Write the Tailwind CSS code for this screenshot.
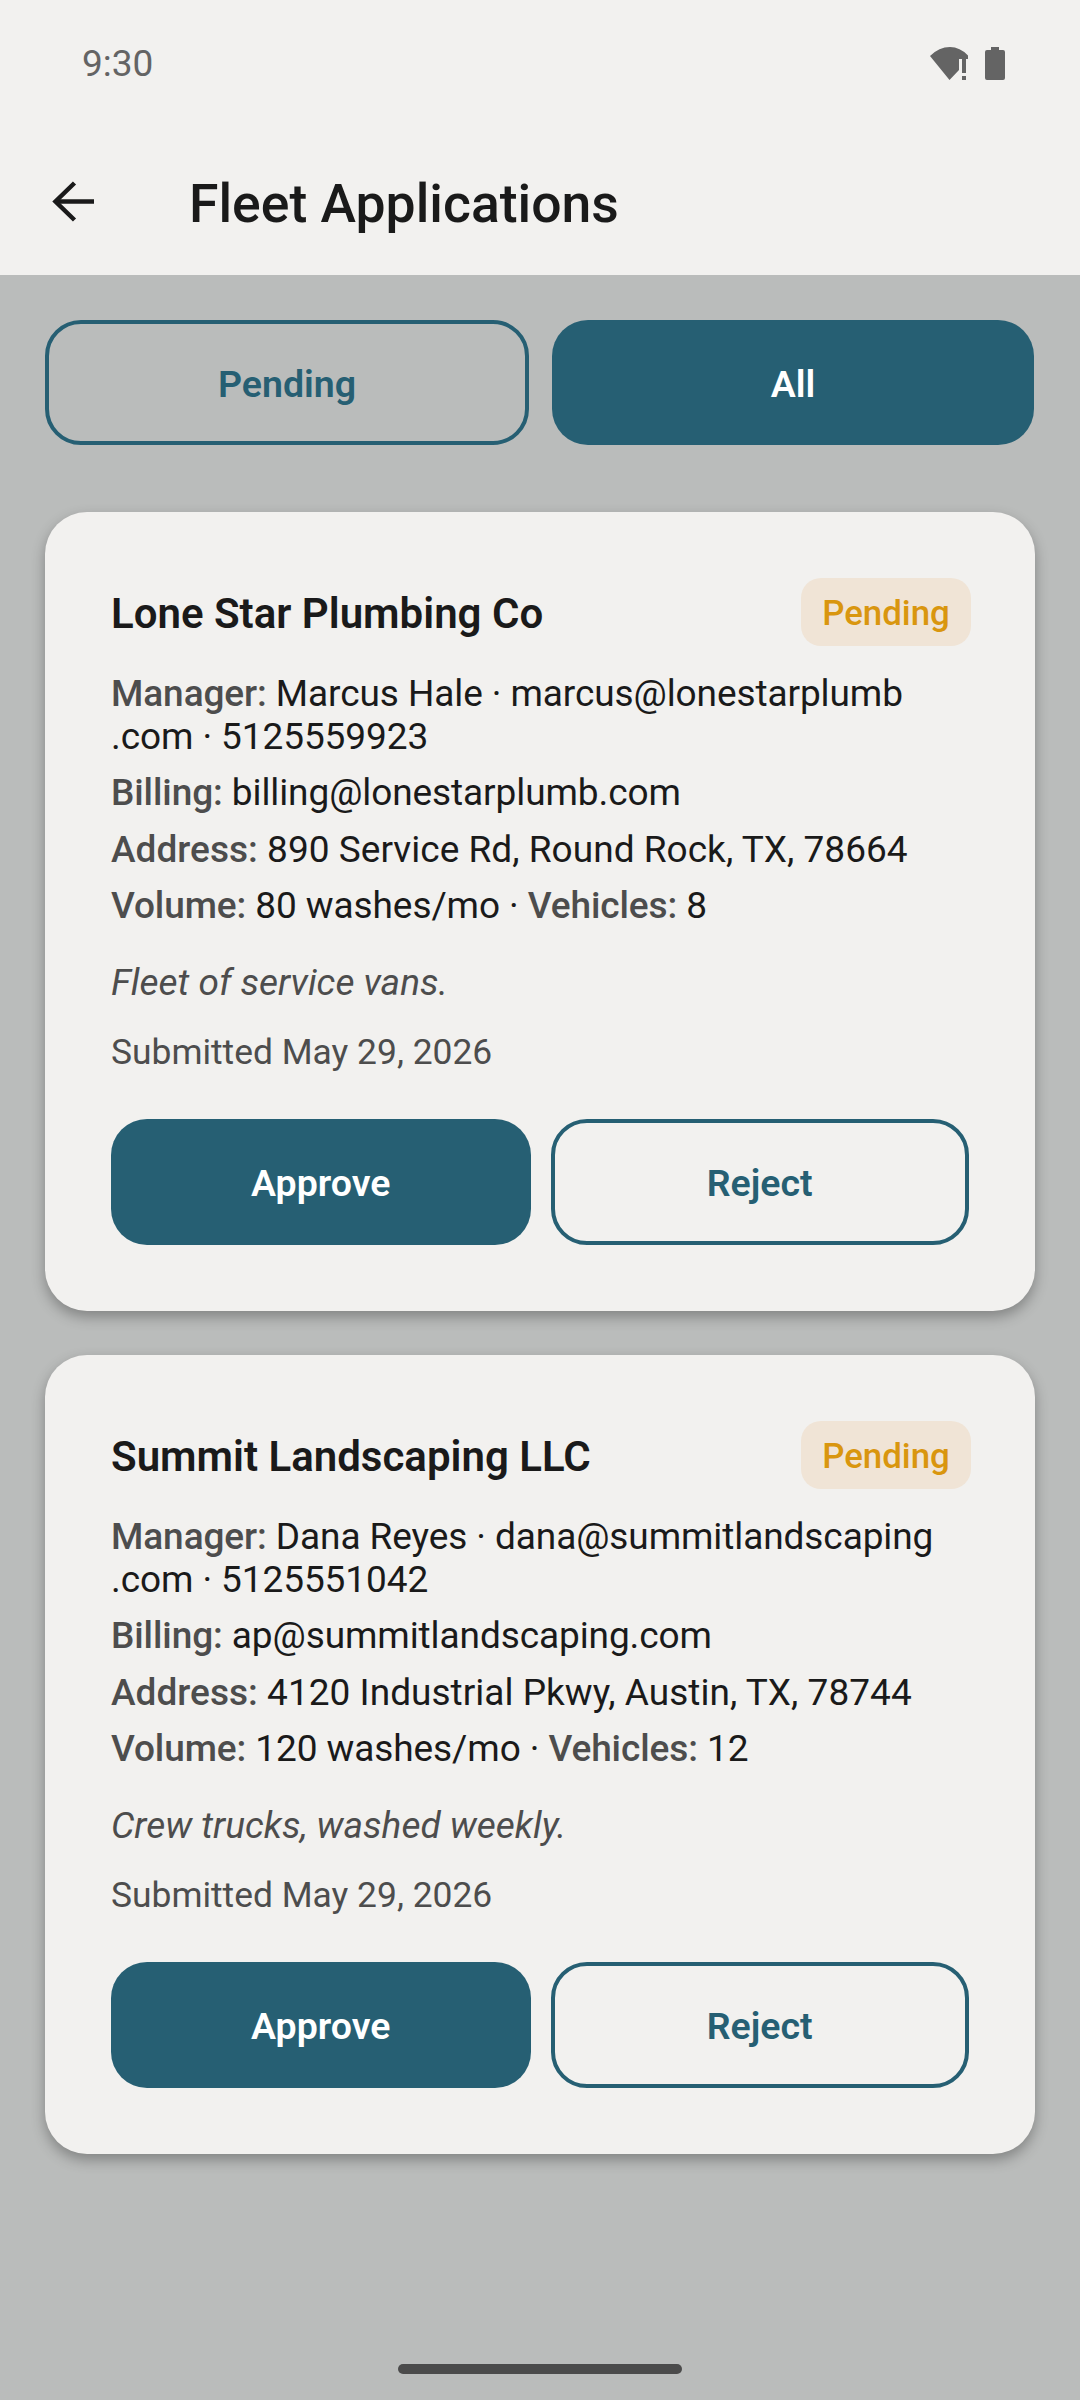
<!DOCTYPE html>
<html lang="en">
  <head>
    <meta charset="UTF-8" />
    <meta name="viewport" content="width=device-width, initial-scale=1.0" />
    <title>Fleet Applications</title>
    <script src="https://cdn.jsdelivr.net/npm/@tailwindcss/browser@4"></script>
  </head>
  <body class="w-[1080px] h-[2400px] overflow-hidden bg-[#babcbb] font-[Roboto,sans-serif] relative">
    <!-- status bar + app bar -->
    <header class="h-[275px] bg-[#f2f1ef]">
      <div class="h-[126px] flex items-start justify-between pl-[82px] pr-[75px] pt-[42px]">
        <span class="text-[37px] leading-[44px] text-[#646464]">9:30</span>
        <div class="flex items-start gap-[17px] pt-[5px]">
          <svg width="38" height="33" viewBox="0 0 38 33">
            <path d="M0 9 Q9 0 20 0 Q30 0 38 8.5 V12 H29 V23 L19.5 33 Z" fill="#646464" />
            <rect x="32" y="12" width="4" height="14" fill="#646464" />
            <rect x="32" y="29" width="4" height="4" fill="#646464" />
          </svg>
          <svg width="20" height="33" viewBox="0 0 20 33">
            <path d="M6 0 H14 V3 H18 Q20 3 20 5 V31 Q20 33 18 33 H2 Q0 33 0 31 V5 Q0 3 2 3 H6 Z" fill="#646464" />
          </svg>
        </div>
      </div>
      <div class="h-[149px] flex items-start">
        <button class="ml-[52px] mt-[55px] w-[42px] h-[42px]">
          <svg width="42" height="42" viewBox="0 0 42 42" fill="none" stroke="#1a1a1a" stroke-width="4.5">
            <path d="M42 20.5 H4" />
            <path d="M22.5 2 L3.5 20.5 L22.5 39" />
          </svg>
        </button>
        <h1 class="ml-[95px] mt-[48px] text-[53.5px] leading-[60px] font-medium text-[#1a1a1a]">Fleet Applications</h1>
      </div>
    </header>

    <main class="px-[45px] pt-[45px]">
      <div class="flex gap-[23px] mb-[67px]">
        <button class="w-[484px] h-[125px] pt-[4px] rounded-[36px] border-[4px] border-[#265f73] text-[37.5px] font-semibold text-[#265f73]">Pending</button>
        <button class="w-[482px] h-[125px] pt-[4px] rounded-[36px] bg-[#265f73] text-[37.5px] font-semibold text-white">All</button>
      </div>

      <div class="flex flex-col gap-[44px]">
        <section class="h-[799px] rounded-[42px] bg-[#f2f1ef] shadow-[0_6px_14px_rgba(0,0,0,0.3)] px-[66px] pt-[66px]">
          <div class="flex items-center justify-between h-[68px] -mr-[2px]">
            <h2 class="pt-[3px] text-[42px] font-semibold text-[#1a1a1a]">Lone Star Plumbing Co</h2>
            <span class="w-[170px] h-[68px] pt-[2px] flex items-center justify-center rounded-[20px] bg-[#f0e4d6] text-[34.8px] font-medium text-[#d9960f]">Pending</span>
          </div>
          <div class="mt-[26px] text-[37px] leading-[43px] text-[#1a1a1a]">
            <p class="tracking-[-0.09px]"><b class="font-medium text-[#4d4d4d]">Manager:</b> Marcus Hale · marcus@lonestarplumb<br />.com · 5125559923</p>
            <p class="mt-[13px] tracking-[-0.09px]"><b class="font-medium text-[#4d4d4d]">Billing:</b> billing@lonestarplumb.com</p>
            <p class="mt-[14px] tracking-[0.03px]"><b class="font-medium text-[#4d4d4d]">Address:</b> 890 Service Rd, Round Rock, TX, 78664</p>
            <p class="mt-[13px] tracking-[-0.09px]"><b class="font-medium text-[#4d4d4d]">Volume:</b> 80 washes/mo · <b class="font-medium text-[#4d4d4d]">Vehicles:</b> 8</p>
          </div>
          <p class="mt-[34px] text-[37px] leading-[43px] italic text-[#4d4d4d]">Fleet of service vans.</p>
          <p class="mt-[27px] text-[35.4px] leading-[43px] text-[#4d4d4d]">Submitted May 29, 2026</p>
          <div class="mt-[45px] flex gap-[20px]">
            <button class="w-[420px] h-[126px] pt-[2px] rounded-[36px] bg-[#265f73] text-[37.5px] font-semibold text-white">Approve</button>
            <button class="w-[419px] h-[126px] pt-[2px] rounded-[36px] border-[4px] border-[#265f73] text-[37.5px] font-semibold text-[#265f73]">Reject</button>
          </div>
        </section>

        <section class="h-[799px] rounded-[42px] bg-[#f2f1ef] shadow-[0_6px_14px_rgba(0,0,0,0.3)] px-[66px] pt-[66px]">
          <div class="flex items-center justify-between h-[68px] -mr-[2px]">
            <h2 class="pt-[3px] text-[42px] font-semibold text-[#1a1a1a]">Summit Landscaping LLC</h2>
            <span class="w-[170px] h-[68px] pt-[2px] flex items-center justify-center rounded-[20px] bg-[#f0e4d6] text-[34.8px] font-medium text-[#d9960f]">Pending</span>
          </div>
          <div class="mt-[26px] text-[37px] leading-[43px] text-[#1a1a1a]">
            <p class="tracking-[-0.09px]"><b class="font-medium text-[#4d4d4d]">Manager:</b> Dana Reyes · dana@summitlandscaping<br />.com · 5125551042</p>
            <p class="mt-[13px] tracking-[-0.09px]"><b class="font-medium text-[#4d4d4d]">Billing:</b> ap@summitlandscaping.com</p>
            <p class="mt-[14px] tracking-[0.03px]"><b class="font-medium text-[#4d4d4d]">Address:</b> 4120 Industrial Pkwy, Austin, TX, 78744</p>
            <p class="mt-[13px] tracking-[-0.09px]"><b class="font-medium text-[#4d4d4d]">Volume:</b> 120 washes/mo · <b class="font-medium text-[#4d4d4d]">Vehicles:</b> 12</p>
          </div>
          <p class="mt-[34px] text-[37px] leading-[43px] italic text-[#4d4d4d]">Crew trucks, washed weekly.</p>
          <p class="mt-[27px] text-[35.4px] leading-[43px] text-[#4d4d4d]">Submitted May 29, 2026</p>
          <div class="mt-[45px] flex gap-[20px]">
            <button class="w-[420px] h-[126px] pt-[2px] rounded-[36px] bg-[#265f73] text-[37.5px] font-semibold text-white">Approve</button>
            <button class="w-[419px] h-[126px] pt-[2px] rounded-[36px] border-[4px] border-[#265f73] text-[37.5px] font-semibold text-[#265f73]">Reject</button>
          </div>
        </section>
      </div>
    </main>

    <div class="absolute left-[398px] bottom-[26px] w-[284px] h-[10px] rounded-full bg-[#4b4b4b]"></div>
  </body>
</html>
